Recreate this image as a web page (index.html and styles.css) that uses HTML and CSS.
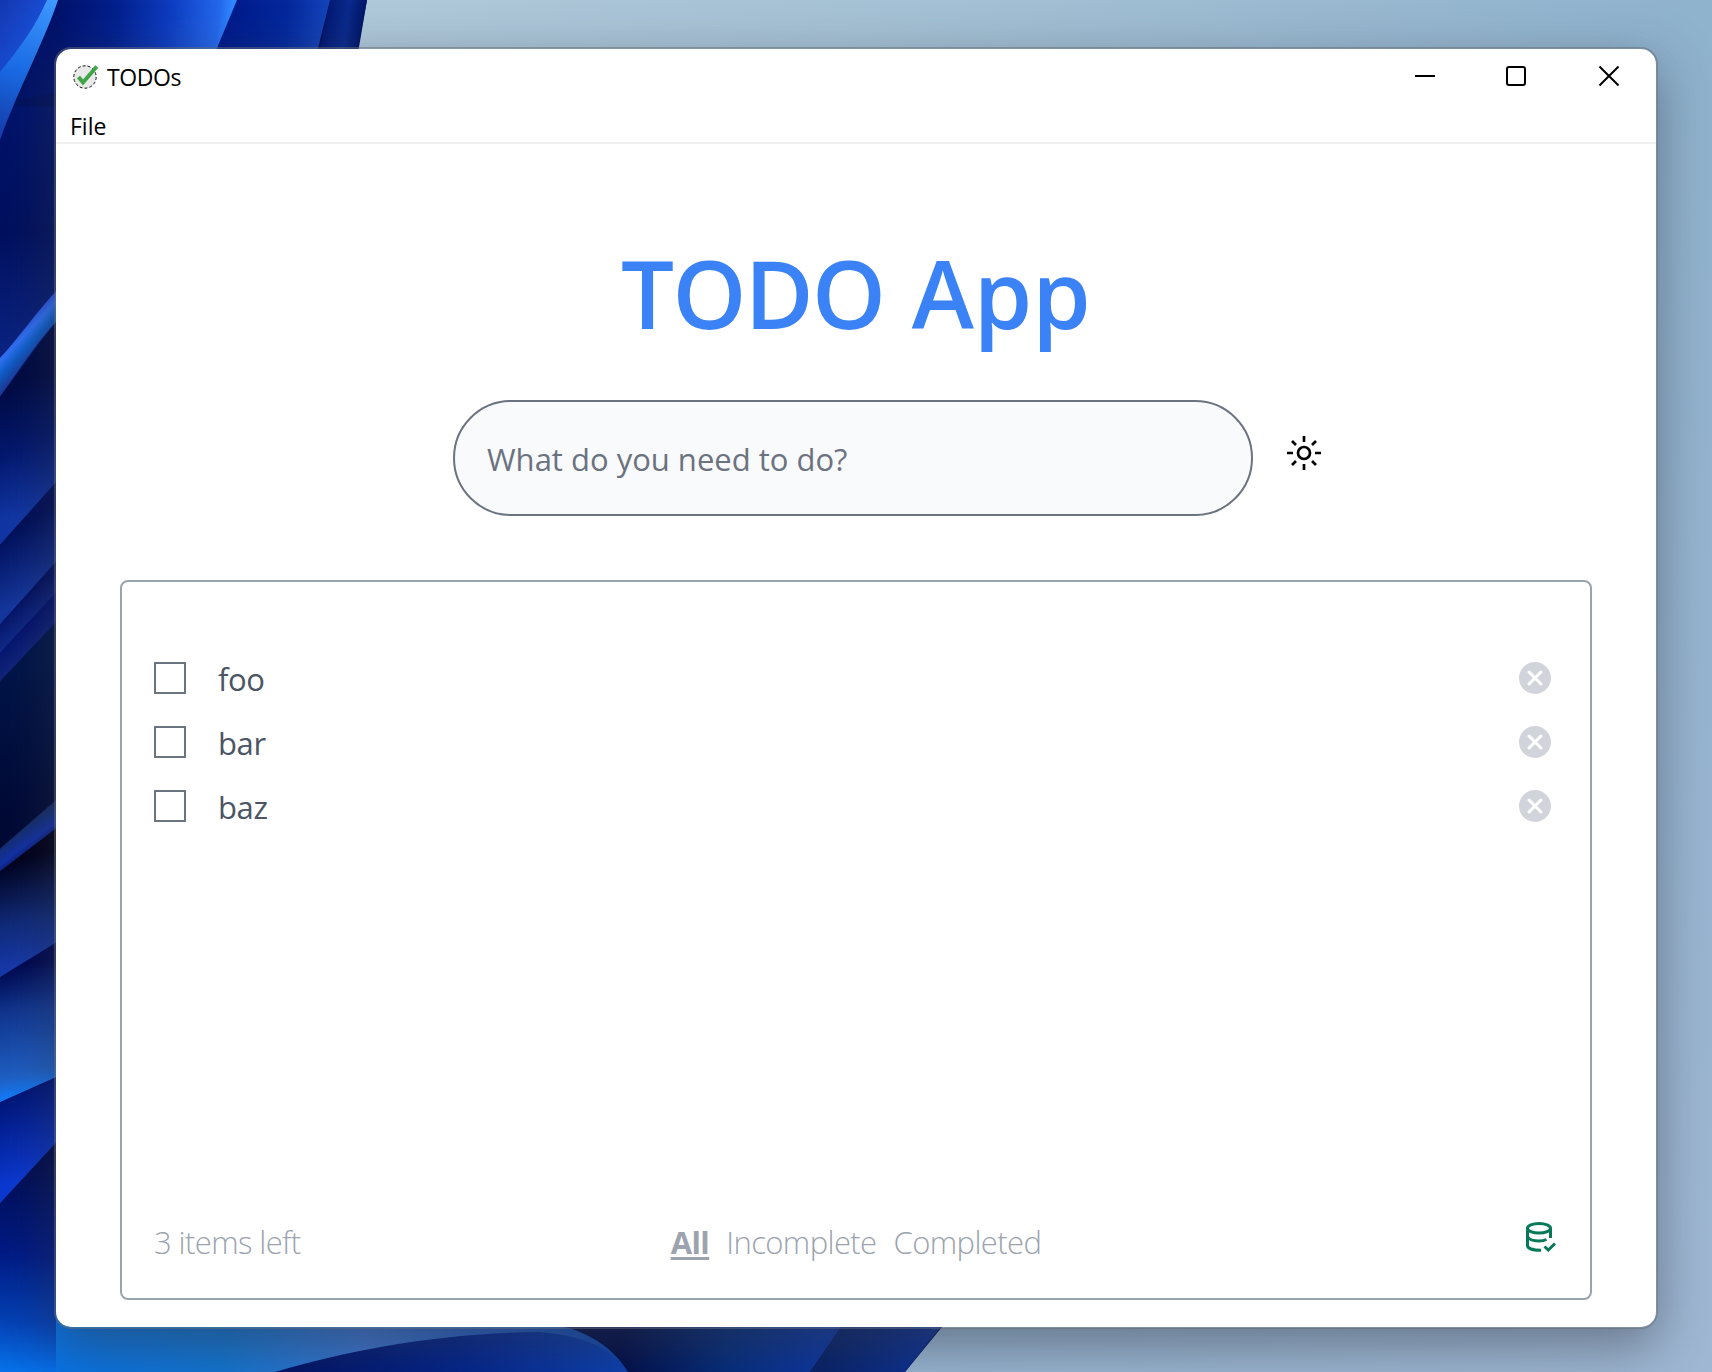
FILE: index.html
```html
<!DOCTYPE html>
<html lang="en">
<head>
<meta charset="utf-8">
<title>TODOs</title>
<link rel="stylesheet" href="styles.css">
</head>
<body>
<svg class="wallpaper" viewBox="0 0 1712 1372" preserveAspectRatio="none" aria-hidden="true">
  <defs>
    <linearGradient id="sky" x1="0" y1="0" x2="1" y2="1"><stop offset="0" stop-color="#b6cddd"/><stop offset=".28" stop-color="#a4c0d4"/><stop offset=".5" stop-color="#8fb2cd"/><stop offset="1" stop-color="#a0b8d4"/></linearGradient>
    <linearGradient id="a" gradientUnits="userSpaceOnUse" x1="0" y1="0" x2="50" y2="30"><stop offset="0" stop-color="#1436b0"/><stop offset="1" stop-color="#1a55de"/></linearGradient>
    <linearGradient id="b" gradientUnits="userSpaceOnUse" x1="50" y1="0" x2="0" y2="130"><stop offset="0" stop-color="#3f98ff"/><stop offset=".55" stop-color="#1a6ce8"/><stop offset="1" stop-color="#163fae"/></linearGradient>
    <linearGradient id="c" gradientUnits="userSpaceOnUse" x1="55" y1="20" x2="228" y2="40"><stop offset="0" stop-color="#00126a"/><stop offset=".35" stop-color="#03208e"/><stop offset=".65" stop-color="#0d3cc0"/><stop offset=".93" stop-color="#2468ec"/><stop offset="1" stop-color="#2f86ff"/></linearGradient>
    <linearGradient id="d" gradientUnits="userSpaceOnUse" x1="225" y1="0" x2="330" y2="12"><stop offset="0" stop-color="#00198a"/><stop offset=".6" stop-color="#03289c"/><stop offset="1" stop-color="#1545bb"/></linearGradient>
    <linearGradient id="e" gradientUnits="userSpaceOnUse" x1="322" y1="0" x2="367" y2="6"><stop offset="0" stop-color="#00146c"/><stop offset=".6" stop-color="#0a2a8c"/><stop offset="1" stop-color="#001464"/></linearGradient>
    <linearGradient id="f" x1="0" y1="0" x2="0" y2="1"><stop offset="0" stop-color="#00136c"/><stop offset=".5" stop-color="#01105e"/><stop offset="1" stop-color="#0b2484"/></linearGradient>
    <linearGradient id="g" gradientUnits="userSpaceOnUse" x1="20" y1="298" x2="38" y2="318"><stop offset="0" stop-color="#2a55e0"/><stop offset=".25" stop-color="#2f70f2"/><stop offset=".55" stop-color="#0f5fca"/><stop offset="1" stop-color="#1c3a98"/></linearGradient>
    <linearGradient id="h" gradientUnits="userSpaceOnUse" x1="20" y1="340" x2="45" y2="450"><stop offset="0" stop-color="#000a42"/><stop offset=".5" stop-color="#03176c"/><stop offset="1" stop-color="#1136a4"/></linearGradient>
    <linearGradient id="i" gradientUnits="userSpaceOnUse" x1="15" y1="465" x2="40" y2="520"><stop offset="0" stop-color="#000e58"/><stop offset="1" stop-color="#15379e"/></linearGradient>
    <linearGradient id="j" gradientUnits="userSpaceOnUse" x1="18" y1="525" x2="34" y2="550"><stop offset="0" stop-color="#020f5e"/><stop offset="1" stop-color="#122c8c"/></linearGradient>
    <linearGradient id="k" gradientUnits="userSpaceOnUse" x1="18" y1="550" x2="34" y2="574"><stop offset="0" stop-color="#02116c"/><stop offset="1" stop-color="#13277c"/></linearGradient>
    <linearGradient id="l" gradientUnits="userSpaceOnUse" x1="0" y1="590" x2="30" y2="780"><stop offset="0" stop-color="#001448"/><stop offset=".6" stop-color="#000a36"/><stop offset="1" stop-color="#000a30"/></linearGradient>
    <linearGradient id="m" gradientUnits="userSpaceOnUse" x1="20" y1="815" x2="32" y2="834"><stop offset="0" stop-color="#152d62"/><stop offset=".7" stop-color="#1231a4"/><stop offset="1" stop-color="#0b1a70"/></linearGradient>
    <linearGradient id="n" gradientUnits="userSpaceOnUse" x1="20" y1="840" x2="34" y2="928"><stop offset="0" stop-color="#00001a"/><stop offset=".6" stop-color="#102a78"/><stop offset="1" stop-color="#1638a8"/></linearGradient>
    <linearGradient id="o" gradientUnits="userSpaceOnUse" x1="15" y1="932" x2="35" y2="1036"><stop offset="0" stop-color="#000850"/><stop offset=".35" stop-color="#113690"/><stop offset=".85" stop-color="#1f5fc4"/><stop offset="1" stop-color="#1478f4"/></linearGradient>
    <linearGradient id="p" gradientUnits="userSpaceOnUse" x1="20" y1="1035" x2="40" y2="1105"><stop offset="0" stop-color="#001474"/><stop offset="1" stop-color="#0b38d0"/></linearGradient>
    <linearGradient id="q" gradientUnits="userSpaceOnUse" x1="60" y1="1090" x2="45" y2="1280"><stop offset="0" stop-color="#000a48"/><stop offset=".45" stop-color="#001a84"/><stop offset=".75" stop-color="#0440b4"/><stop offset="1" stop-color="#0878f0"/></linearGradient>
    <linearGradient id="r" gradientUnits="userSpaceOnUse" x1="56" y1="0" x2="620" y2="0"><stop offset="0" stop-color="#0872e4"/><stop offset=".3" stop-color="#1274d0"/><stop offset=".55" stop-color="#3b72cc"/><stop offset="1" stop-color="#0d46ae"/></linearGradient>
    <linearGradient id="s" gradientUnits="userSpaceOnUse" x1="300" y1="0" x2="620" y2="0"><stop offset="0" stop-color="#001468"/><stop offset=".5" stop-color="#02238a"/><stop offset="1" stop-color="#0b3fae"/></linearGradient>
    <linearGradient id="t" gradientUnits="userSpaceOnUse" x1="620" y1="0" x2="835" y2="0"><stop offset="0" stop-color="#000d48"/><stop offset=".5" stop-color="#042c7c"/><stop offset="1" stop-color="#0c36a4"/></linearGradient>
    <linearGradient id="u" gradientUnits="userSpaceOnUse" x1="815" y1="1340" x2="930" y2="1360"><stop offset="0" stop-color="#062064"/><stop offset="1" stop-color="#0b3094"/></linearGradient>
  </defs>
  <rect width="1712" height="1372" fill="url(#sky)"/>
  <path d="M0 0H367L350 100V1200L942 1327 905 1372H0Z" fill="#00115e"/>
  <path d="M318 60L330 0H367L352 80Z" fill="url(#e)"/>
  <path d="M210 60L237 0H330L315 60Z" fill="url(#d)"/>
  <path d="M20 100L58 0H237L212 60Z" fill="url(#c)"/>
  <g transform="matrix(1 0 0 1.186 0 -24.2)">
    <path d="M0 110H56V266L0 322Z" fill="url(#f)"/>
    <path d="M56 266V292C38 308 18 334 0 355V322C18 306 38 282 56 266Z" fill="url(#g)"/>
    <path d="M56 292V427L0 480V355Z" fill="url(#h)"/>
    <path d="M56 427V494L0 547V480Z" fill="url(#i)"/>
    <path d="M56 494V520L0 571V547Z" fill="url(#j)"/>
    <path d="M56 520V545L0 595V571Z" fill="url(#k)"/>
    <path d="M56 545V792L0 835V595Z" fill="url(#l)"/>
  </g>
  <path d="M0 0H50L0 80Z" fill="url(#a)"/>
  <path d="M47 0H58C45 40 20 85 0 140V72C20 48 36 25 47 0Z" fill="url(#b)"/>
  <g transform="matrix(1 0 0 1.19 0 -142.5)">
    <path d="M56 792V816L0 852V833Z" fill="url(#m)"/>
    <path d="M56 816V912L0 941V852Z" fill="url(#n)"/>
    <path d="M56 912V1025L0 1046V941Z" fill="url(#o)"/>
    <path d="M56 1025V1080L0 1131V1046Z" fill="url(#p)"/>
    <path d="M56 1080V1280H0V1131Z" fill="url(#q)"/>
  </g>
  <path d="M56 1300H600L632 1372H56Z" fill="url(#r)"/>
  <path d="M275 1372C350 1350 440 1333 540 1332C590 1336 615 1352 628 1372Z" fill="url(#s)"/>
  <path d="M560 1320H846L810 1372H628C615 1350 590 1332 560 1326Z" fill="url(#t)"/>
  <path d="M846 1320H946L905 1372H810Z" fill="url(#u)"/>
</svg>

<main class="window">
  <header class="titlebar">
    <svg class="app-icon" viewBox="0 0 26 26" aria-hidden="true"><circle cx="12" cy="13" r="11.2" fill="#e9e9e9" stroke="#111" stroke-width="1" stroke-dasharray="3 2"/><path d="M5.5 13L10 18.500 23.800 2.500" fill="none" stroke="#3fa648" stroke-width="4"/></svg>
    <span class="window-title">TODOs</span>
    <div class="controls">
      <svg viewBox="0 0 20 20"><path d="M0 10H20"/></svg>
      <svg viewBox="0 0 20 20"><rect x="1" y="1" width="18" height="18" rx="2"/></svg>
      <svg viewBox="0 0 20 20"><path d="M.5 .5L19.500 19.500M19.500 .5L.5 19.500"/></svg>
    </div>
  </header>
  <nav class="menubar"><span>File</span></nav>
  <section class="content">
    <h1 class="heading"><span class="tight">TODO</span> App</h1>
    <div class="entry">
      <div class="entry-field"><span>What do you need to do?</span></div>
      <svg class="sun" viewBox="-18 -18 36 36"><circle r="6"/><path d="M0-17V-11M0 11V17M-17 0H-11M11 0H17M-12-12L-8-8M12-12L8-8M-12 12L-8 8M12 12L8 8"/></svg>
    </div>
    <div class="panel">
      <ul class="todos">
        <li><i class="box"></i><span>foo</span><svg class="remove" viewBox="0 0 32 32"><circle cx="16" cy="16" r="16"/><path d="M10 10L22 22M22 10L10 22"/></svg></li>
        <li><i class="box"></i><span>bar</span><svg class="remove" viewBox="0 0 32 32"><circle cx="16" cy="16" r="16"/><path d="M10 10L22 22M22 10L10 22"/></svg></li>
        <li><i class="box"></i><span>baz</span><svg class="remove" viewBox="0 0 32 32"><circle cx="16" cy="16" r="16"/><path d="M10 10L22 22M22 10L10 22"/></svg></li>
      </ul>
      <footer class="status">
        <span class="count">3 items left</span>
        <div class="filters"><span class="filter current">All</span><span class="filter">Incomplete</span><span class="filter">Completed</span></div>
        <svg class="db" viewBox="0 0 30 30"><ellipse cx="13" cy="6.300" rx="11.500" ry="4.800"/><path d="M1.500 6.300V23.500C1.500 26.300 6.500 28.300 15 28.300M24.500 6.300V16M1.500 14.500C3 18 8 19 13 19C16 19 18.500 18.500 20.500 17.500M18.500 24.500L22.300 28 29 21.500"/></svg>
      </footer>
    </div>
  </section>
</main>
</body>
</html>
```
FILE: styles.css
```css
* { box-sizing: border-box; }
body {
  margin: 0;
  width: 1712px;
  height: 1372px;
  padding: 47px 54px;
  overflow: hidden;
  font-family: "Open Sans", "Noto Sans", sans-serif;
}
.wallpaper { position: absolute; inset: 0; width: 1712px; height: 1372px; z-index: -1; }
.window {
  display: flex;
  flex-direction: column;
  width: 1604px;
  height: 1282px;
  border: 2px solid rgba(100, 108, 118, .5);
  border-radius: 17px;
  background: #fff;
  background-clip: padding-box;
  box-shadow: 0 18px 52px rgba(50, 55, 70, .5);
}
.titlebar { display: flex; align-items: center; height: 56px; padding: 0 37px 0 17px; font-size: 23px; color: #000; }
.app-icon { width: 26px; height: 26px; margin-right: 8px; }
.window-title { letter-spacing: -.4px; }
.controls { display: flex; gap: 72px; margin: -2px 0 0 auto; }
.controls svg { width: 20px; height: 20px; fill: none; stroke: #000; stroke-width: 2; }
.controls svg:nth-child(2) { margin: 0 1px 0 -1px; }
.menubar { display: flex; align-items: center; height: 39px; padding: 4px 0 0 14px; border-bottom: 2px solid #f0f0f0; font-size: 23px; }
.content { display: flex; flex-direction: column; flex: 1; padding: 101px 64px 27px; }
.heading { margin: 0; text-align: center; font-size: 94px; line-height: 96px; font-weight: 600; color: #3b82f6; word-spacing: 3px; }
.tight { letter-spacing: -1.700px; }
.entry { display: flex; gap: 33px; margin: 59px 0 64px 333px; }
.entry-field {
  display: flex;
  align-items: center;
  width: 800px;
  height: 116px;
  padding: 2px 0 0 32px;
  border: 2px solid #6b7280;
  border-radius: 58px;
  background: #f9fafb;
  font-size: 31px;
  color: #6b7280;
}
.sun { width: 36px; height: 36px; margin-top: 34.500px; fill: none; stroke: #000; stroke-width: 2.700; }
.panel {
  display: flex;
  flex-direction: column;
  justify-content: space-between;
  flex: 1;
  padding: 64px 32px 24px;
  border: 2px solid #9ca3af;
  border-radius: 8px;
  font-size: 31px;
}
.todos { margin: 0; padding: 0; list-style: none; color: #4b5563; }
.todos li { display: flex; align-items: center; height: 64px; padding-right: 7px; }
.todos span { padding-top: 2px; letter-spacing: -.4px; }
.box { width: 32px; height: 32px; margin-right: 32px; border: 2px solid #6b7280; }
.remove { width: 32px; height: 32px; margin-left: auto; fill: #d1d5db; }
.remove path { stroke: #fff; stroke-width: 3; stroke-linecap: round; }
.status { display: grid; grid-template-columns: 1fr auto 1fr; align-items: center; height: 64px; font-weight: 300; letter-spacing: -.6px; color: #9ca3af; }
.filters { display: flex; gap: 17px; }
.current { font-weight: 700; text-decoration: underline; text-decoration-thickness: 3px; text-underline-offset: 3px; }
.db { width: 30px; height: 30px; margin: -11px 2px 0 auto; fill: none; stroke: #047857; stroke-width: 3; }
```
